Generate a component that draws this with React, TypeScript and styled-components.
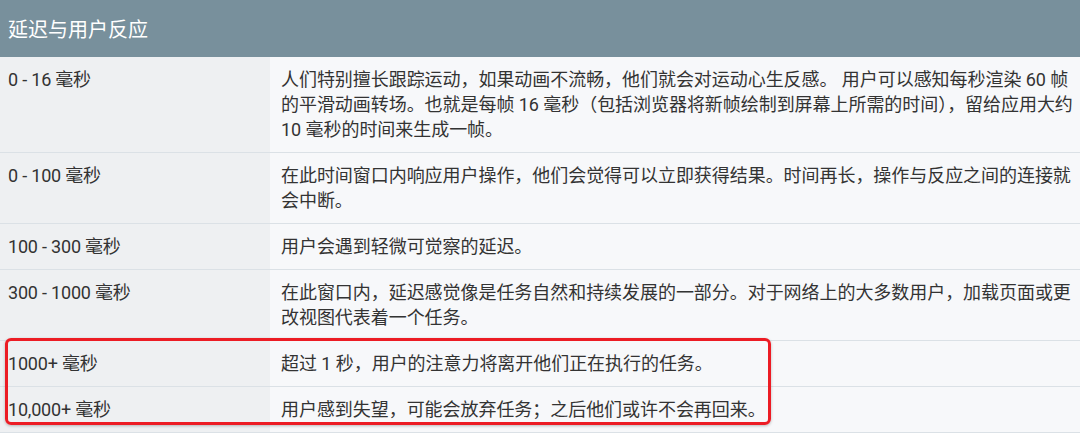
import React from 'react'
import styled, { createGlobalStyle } from 'styled-components'

const GlobalStyle = createGlobalStyle`
  html, body {
    margin: 0;
    padding: 0;
    background: #f7f8fa;
  }
  body {
    font-family: Roboto, "Noto Sans CJK SC", "Noto Sans", sans-serif;
    -webkit-font-smoothing: antialiased;
  }
`

const Wrapper = styled.div`
  position: relative;
  width: 1080px;
  height: 433px;
  overflow: hidden;
`

const Header = styled.div`
  height: 57px;
  display: flex;
  align-items: center;
  padding: 0 8px;
  background: #78909c;
  color: #ffffff;
  font-size: 20px;
  box-sizing: border-box;
`

const Row = styled.div`
  display: grid;
  grid-template-columns: 270px 1fr;
  border-bottom: 1px solid #dbe1e6;
`

const Cell = styled.div<{ $side: 'left' | 'right' }>`
  padding: ${props => (props.$side === 'left' ? '10px 8px 10px 8px' : '10px 0 10px 11px')};
  background: ${props => (props.$side === 'left' ? '#eef0f2' : '#f7f8fa')};
  color: #333333;
  font-size: 18px;
  line-height: 25px;
  letter-spacing: ${props => (props.$side === 'left' ? '-0.2px' : '-0.05px')};
`

const Highlight = styled.div`
  position: absolute;
  left: 5px;
  top: 338px;
  width: 766px;
  height: 87px;
  box-sizing: border-box;
  border: 3px solid #ec1c24;
  border-radius: 6px;
  box-shadow: 0 1px 3px rgba(0, 0, 0, 0.25);
  pointer-events: none;
`

const rows = [
  {
    time: '0 - 16 毫秒',
    text: '人们特别擅长跟踪运动，如果动画不流畅，他们就会对运动心生反感。 用户可以感知每秒渲染 60 帧的平滑动画转场。也就是每帧 16 毫秒（包括浏览器将新帧绘制到屏幕上所需的时间），留给应用大约 10 毫秒的时间来生成一帧。'
  },
  {
    time: '0 - 100 毫秒',
    text: '在此时间窗口内响应用户操作，他们会觉得可以立即获得结果。时间再长，操作与反应之间的连接就会中断。'
  },
  {
    time: '100 - 300 毫秒',
    text: '用户会遇到轻微可觉察的延迟。'
  },
  {
    time: '300 - 1000 毫秒',
    text: '在此窗口内，延迟感觉像是任务自然和持续发展的一部分。对于网络上的大多数用户，加载页面或更改视图代表着一个任务。'
  },
  {
    time: '1000+ 毫秒',
    text: '超过 1 秒，用户的注意力将离开他们正在执行的任务。'
  },
  {
    time: '10,000+ 毫秒',
    text: '用户感到失望，可能会放弃任务；之后他们或许不会再回来。'
  }
]

export default function App() {
  return (
    <Wrapper>
      <GlobalStyle />
      <Header>延迟与用户反应</Header>
      {rows.map(row => (
        <Row key={row.time}>
          <Cell $side="left">{row.time}</Cell>
          <Cell $side="right">{row.text}</Cell>
        </Row>
      ))}
      <Highlight />
    </Wrapper>
  )
}
